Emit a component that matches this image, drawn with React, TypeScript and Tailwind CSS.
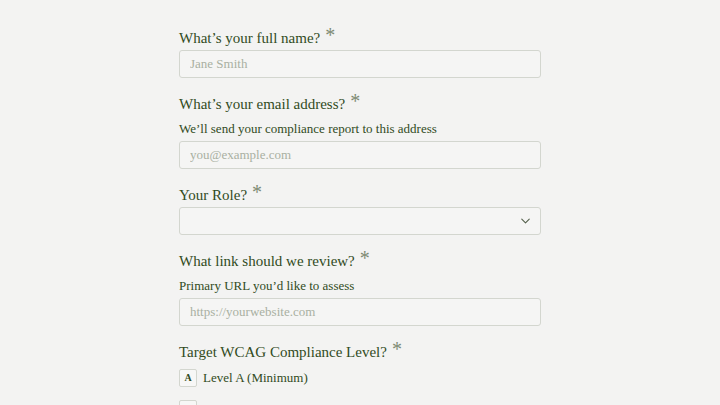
import { ChevronDown } from "lucide-react";

const serif = { fontFamily: '"Liberation Serif", serif' };

function Label({ text }: { text: string }) {
  return (
    <label className="mb-[2px] flex items-start text-[15px] leading-5 text-[#314b1d]">
      <span>{text}</span>
      <span className="ml-[5px] -mt-[3px] text-[20px] leading-5 text-[#7d8a72]">*</span>
    </label>
  );
}

function Helper({ text }: { text: string }) {
  return <p className="mb-[2px] mt-[5px] text-[13px] leading-5 text-[#314b1d]">{text}</p>;
}

function TextInput({ placeholder }: { placeholder: string }) {
  return (
    <input
      type="text"
      placeholder={placeholder}
      className="block h-7 w-full rounded-[3px] border border-[#d3d6cf] bg-[#f5f5f4] px-[10px] text-[13px] text-[#314b1d] outline-none placeholder:text-[#a9b0a2]"
    />
  );
}

const levels = [
  ["A", "Level A (Minimum)"],
  ["B", "Level AA (Recommended)"],
  ["C", "Level AAA (Enhanced)"],
];

export default function App() {
  return (
    <div className="h-[405px] overflow-hidden bg-[#f3f3f2]" style={serif}>
      <form className="mx-auto flex w-[362px] flex-col gap-4 pt-[28px]">
        <div>
          <Label text="What’s your full name?" />
          <TextInput placeholder="Jane Smith" />
        </div>

        <div>
          <Label text="What’s your email address?" />
          <Helper text="We’ll send your compliance report to this address" />
          <TextInput placeholder="you@example.com" />
        </div>

        <div>
          <Label text="Your Role?" />
          <div className="relative">
            <select className="block h-7 w-full appearance-none rounded-[3px] border border-[#d3d6cf] bg-[#f5f5f4] px-[10px] text-[13px] text-[#314b1d] outline-none">
              <option value=""></option>
            </select>
            <ChevronDown
              size={15}
              strokeWidth={1.75}
              className="pointer-events-none absolute right-[8px] top-1/2 -translate-y-1/2 text-[#55604c]"
            />
          </div>
        </div>

        <div>
          <Label text="What link should we review?" />
          <Helper text="Primary URL you’d like to assess" />
          <TextInput placeholder="https://yourwebsite.com" />
        </div>

        <div>
          <Label text="Target WCAG Compliance Level?" />
          <div className="mt-[6px] flex flex-col gap-3">
            {levels.map(([key, text]) => (
              <div key={key} className="flex items-center gap-[6px]">
                <span className="flex h-[18px] w-[18px] items-center justify-center rounded-[2px] border border-[#d3d6cf] bg-[#f7f7f6] text-[10px] font-bold text-[#314b1d]">
                  {key}
                </span>
                <span className="text-[13px] text-[#314b1d]">{text}</span>
              </div>
            ))}
          </div>
        </div>
      </form>
    </div>
  );
}
